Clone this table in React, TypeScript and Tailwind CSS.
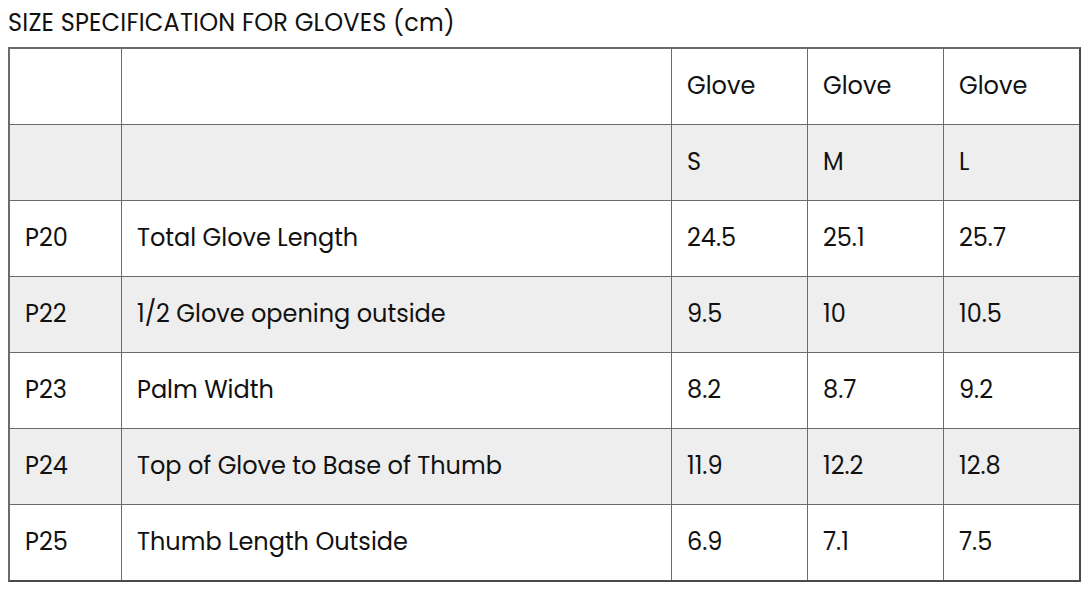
import React from "react";

const rows: { bg: string; cells: string[] }[] = [
  { bg: "bg-white", cells: ["", "", "Glove", "Glove", "Glove"] },
  { bg: "bg-[#eeeeee]", cells: ["", "", "S", "M", "L"] },
  { bg: "bg-white", cells: ["P20", "Total Glove Length", "24.5", "25.1", "25.7"] },
  { bg: "bg-[#eeeeee]", cells: ["P22", "1/2 Glove opening outside", "9.5", "10", "10.5"] },
  { bg: "bg-white", cells: ["P23", "Palm Width", "8.2", "8.7", "9.2"] },
  { bg: "bg-[#eeeeee]", cells: ["P24", "Top of Glove to Base of Thumb", "11.9", "12.2", "12.8"] },
  { bg: "bg-white", cells: ["P25", "Thumb Length Outside", "6.9", "7.1", "7.5"] },
];

const colWidths = ["w-[111px]", "w-[550px]", "w-[136px]", "w-[136px]", "w-[136px]"];

const App: React.FC = () => {
  return (
    <div className="min-h-screen bg-white px-2 text-[#111] font-['Poppins','Open_Sans',sans-serif]">
      <h1 className="h-[47px] pt-[7px] text-[24px] leading-[32px] font-normal tracking-[0.2px]">
        SIZE SPECIFICATION FOR GLOVES (cm)
      </h1>
      <div className="w-[1073px] border-2 border-t-[#6b6b6b] border-l-[#6b6b6b] border-r-[#4a4a4a] border-b-[#4a4a4a]">
        <table className="w-full table-fixed border-separate border-spacing-0">
          <colgroup>
            {colWidths.map((w, i) => (
              <col key={i} className={w} />
            ))}
          </colgroup>
          <tbody>
            {rows.map((row, r) => (
              <tr key={r} className={`${row.bg} ${r === 0 ? "h-[75px]" : "h-[76px]"}`}>
                {row.cells.map((c, i) => (
                  <td
                    key={i}
                    className={`pl-[15px] pb-[2px] align-middle text-[24px] leading-[32px] ${
                      i > 0 ? "border-l border-l-[#6b6b6b]" : ""
                    } ${r > 0 ? "border-t border-t-[#6b6b6b]" : ""}`}
                  >
                    {c}
                  </td>
                ))}
              </tr>
            ))}
          </tbody>
        </table>
      </div>
    </div>
  );
};

export default App;
